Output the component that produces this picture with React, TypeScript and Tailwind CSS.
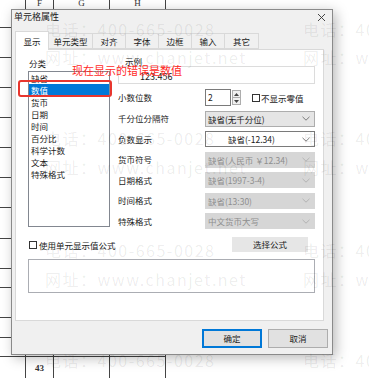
import React from "react";

function Chevron({ color = "#7a7a7a" }: { color?: string }) {
  return (
    <svg width="8" height="5" viewBox="0 0 8 5">
      <path d="M0.5 0.8 L4 4.2 L7.5 0.8" fill="none" stroke={color} strokeWidth="0.9" />
    </svg>
  );
}

function Select({ text, variant }: { text: string; variant: "gray" | "white" | "disabled" }) {
  const cls =
    variant === "white"
      ? "bg-white border-[#7a7a7a] text-[#1a1a1a] pl-[22px]"
      : variant === "gray"
      ? "bg-[#e5e5e5] border-[#adadad] text-[#1a1a1a] pl-[2px]"
      : "bg-[#d6d6d6] border-[#d6d6d6] text-[#8e8e8e] pl-[2px]";
  return (
    <div className={`flex h-[16px] w-[110px] items-center justify-between border pr-[4px] ${cls}`}>
      <span className="leading-[14px]">{text}</span>
      <Chevron color={variant === "disabled" ? "#b0b0b0" : "#6e6e6e"} />
    </div>
  );
}

const rowHeights = [19, 30, 30, 30, 30, 30, 30, 31, 30, 19, 30, 20, 19];

function GridRow({ h, children }: { h: number; children?: React.ReactNode }) {
  return (
    <div className="flex w-[166px] border-b border-[#444]" style={{ height: h }}>
      <div className="w-[26px] border-r border-[#444]" />
      <div className="flex w-[28px] items-center justify-center border-r border-[#444]">{children}</div>
      <div className="w-[56px] border-r border-[#444]" />
      <div className="w-[56px] border-r border-[#444]" />
    </div>
  );
}

const watermarkRows = [
  { top: 19, text: "电话：400-665-0028" },
  { top: 47, text: "网址：www.chanjet.net" },
  { top: 128, text: "电话：400-665-0028" },
  { top: 157, text: "网址：www.chanjet.net" },
  { top: 240, text: "电话：400-665-0028" },
  { top: 269, text: "网址：www.chanjet.net" },
  { top: 350, text: "电话：400-665-0028" },
];

const listItems = ["缺省", "数值", "货币", "日期", "时间", "百分比", "科学计数", "文本", "特殊格式"];
const tabs = [
  { t: "显示", w: 34 },
  { t: "单元类型", w: 44 },
  { t: "对齐", w: 33 },
  { t: "字体", w: 33 },
  { t: "边框", w: 33 },
  { t: "输入", w: 33 },
  { t: "其它", w: 34 },
];

export default function App() {
  return (
    <div className="relative h-[378px] w-[369px] overflow-hidden bg-white font-['Noto_Sans_CJK_SC',sans-serif] text-[8.5px] text-[#1a1a1a]">
      {/* spreadsheet background */}
      <div className="flex flex-col font-['Liberation_Serif',serif]">
        <div className="flex h-[9px] w-[166px] text-[9px] leading-[6px] text-[#333]">
          <div className="w-[26px] border-r border-[#444]" />
          <div className="flex w-[28px] justify-center border-r border-[#444]">F</div>
          <div className="flex w-[56px] justify-center border-r border-[#444]">G</div>
          <div className="flex w-[56px] justify-center border-r border-[#444]">H</div>
        </div>
        {rowHeights.map((h, i) => (
          <GridRow key={i} h={h} />
        ))}
        <GridRow h={24}>
          <span className="text-[9px] font-bold leading-[9px] text-[#333]">43</span>
        </GridRow>
      </div>

      {/* dialog */}
      <div className="absolute left-[11px] top-[9px] flex h-[346px] w-[322px] flex-col border border-[#8a8a8a] bg-[#f0f0f0] shadow-[3px_3px_12px_rgba(0,0,0,0.28)]">
        <div className="flex h-[14px] items-center justify-between pl-[2px] pr-[6px]">
          <span className="text-[9px] leading-[12px]">单元格属性</span>
          <svg width="9" height="9" viewBox="0 0 9 9">
            <path d="M1 1 L8 8 M8 1 L1 8" stroke="#333" strokeWidth="0.9" />
          </svg>
        </div>
        <div className="mt-[7px] flex h-[18px] items-end pl-[3px]">
          {tabs.map((tab, i) =>
            i === 0 ? (
              <div
                key={tab.t}
                className="relative z-10 -mb-px flex h-[19px] items-center justify-center border border-b-0 border-[#d9d9d9] bg-white"
                style={{ width: tab.w }}
              >
                {tab.t}
              </div>
            ) : (
              <div
                key={tab.t}
                className="flex h-[16px] items-center justify-center border border-l-0 border-[#d9d9d9] bg-[#f0f0f0]"
                style={{ width: tab.w }}
              >
                {tab.t}
              </div>
            )
          )}
        </div>
        <div className="ml-[3px] flex h-[272px] w-[309px] flex-col border border-[#d9d9d9] bg-white pl-[12px] pt-[6px]">
          <div className="flex gap-[8px]">
            <div className="flex w-[82px] flex-col">
              <div className="h-[14px] pl-[1px] leading-[14px]">分类</div>
              <div className="mt-[1px] flex h-[156px] flex-col border border-[#828790] bg-white">
                {listItems.map((it) => (
                  <div
                    key={it}
                    className={`h-[12px] pl-[2px] leading-[12px] ${it === "数值" ? "bg-[#0078d7] text-white" : ""}`}
                  >
                    {it}
                  </div>
                ))}
              </div>
            </div>
            <div className="flex w-[197px] flex-col">
              <div className="h-[10px] pl-[7px] leading-[10px]">示例</div>
              <div className="flex h-[18px] items-end border border-[#dcdcdc] pb-[1px] pl-[21px] text-[9px] leading-[11px]">
                123.456
              </div>
              <div className="mt-[5px] grid grid-cols-[87px_110px] items-center gap-y-[4.5px]">
                <span>小数位数</span>
                <div className="flex h-[17px] items-center">
                  <div className="h-[17px] w-[26px] border border-[#7a7a7a] bg-white pl-[2px] leading-[15px]">2</div>
                  <div className="ml-[1px] flex h-[15px] w-[9px] flex-col border border-[#adadad] bg-[#f0f0f0]">
                    <div className="flex flex-1 items-center justify-center border-b border-[#adadad]">
                      <svg width="5" height="3" viewBox="0 0 5 3">
                        <path d="M0 3 L2.5 0 L5 3 Z" fill="#444" />
                      </svg>
                    </div>
                    <div className="flex flex-1 items-center justify-center">
                      <svg width="5" height="3" viewBox="0 0 5 3">
                        <path d="M0 0 L2.5 3 L5 0 Z" fill="#444" />
                      </svg>
                    </div>
                  </div>
                  <div className="ml-[11px] h-[8px] w-[8px] border border-[#333] bg-white" />
                  <span className="ml-[1px] leading-[10px]">不显示零值</span>
                </div>
                <span>千分位分隔符</span>
                <Select text="缺省(无千分位)" variant="gray" />
                <span>负数显示</span>
                <Select text="缺省(-12.34)" variant="white" />
                <span>货币符号</span>
                <Select text="缺省(人民币 ￥12.34)" variant="disabled" />
                <span>日期格式</span>
                <Select text="缺省(1997-3-4)" variant="disabled" />
                <span>时间格式</span>
                <Select text="缺省(13:30)" variant="disabled" />
                <span>特殊格式</span>
                <Select text="中文货币大写" variant="disabled" />
              </div>
            </div>
          </div>
          <div className="mt-[8px] flex h-[15px] w-[287px] items-center justify-between">
            <div className="flex items-center pl-[1px]">
              <div className="h-[8px] w-[8px] border border-[#333] bg-white" />
              <span className="ml-[2px] leading-[10px]">使用单元显示值公式</span>
            </div>
            <div className="mr-[7px] flex h-[15px] w-[76px] items-center justify-center bg-[#e6e6e6]">选择公式</div>
          </div>
          <div className="mt-[7px] h-[34px] w-[287px] border border-[#abadb3] bg-white" />
        </div>
        <div className="mt-[8px] flex justify-end gap-[6px] pr-[4px]">
          <div className="flex h-[19px] w-[60px] items-center justify-center border border-[#0078d7] bg-[#e1e1e1] shadow-[inset_0_0_0_1px_#0078d7]">
            确定
          </div>
          <div className="flex h-[19px] w-[60px] items-center justify-center border border-[#adadad] bg-[#e1e1e1]">
            取消
          </div>
        </div>
      </div>

      {/* watermark */}
      {watermarkRows.map((r, i) => (
        <React.Fragment key={i}>
          <span
            className="pointer-events-none absolute left-[45px] whitespace-nowrap text-[16px] leading-[20px] tracking-[1.5px] text-[rgba(0,0,0,0.08)]"
            style={{ top: r.top }}
          >
            {r.text}
          </span>
          <span
            className="pointer-events-none absolute left-[303px] whitespace-nowrap text-[16px] leading-[20px] tracking-[1.5px] text-[rgba(0,0,0,0.08)]"
            style={{ top: r.top }}
          >
            {r.text}
          </span>
        </React.Fragment>
      ))}

      {/* annotation */}
      <div className="pointer-events-none absolute left-[18px] top-[80px] h-[17px] w-[94px] rounded-[3px] border-2 border-[#e8362e]" />
      <span className="pointer-events-none absolute left-[72px] top-[63px] whitespace-nowrap text-[11px] leading-[15px] text-[#ff2a1f]">
        现在显示的错误是数值
      </span>
    </div>
  );
}
